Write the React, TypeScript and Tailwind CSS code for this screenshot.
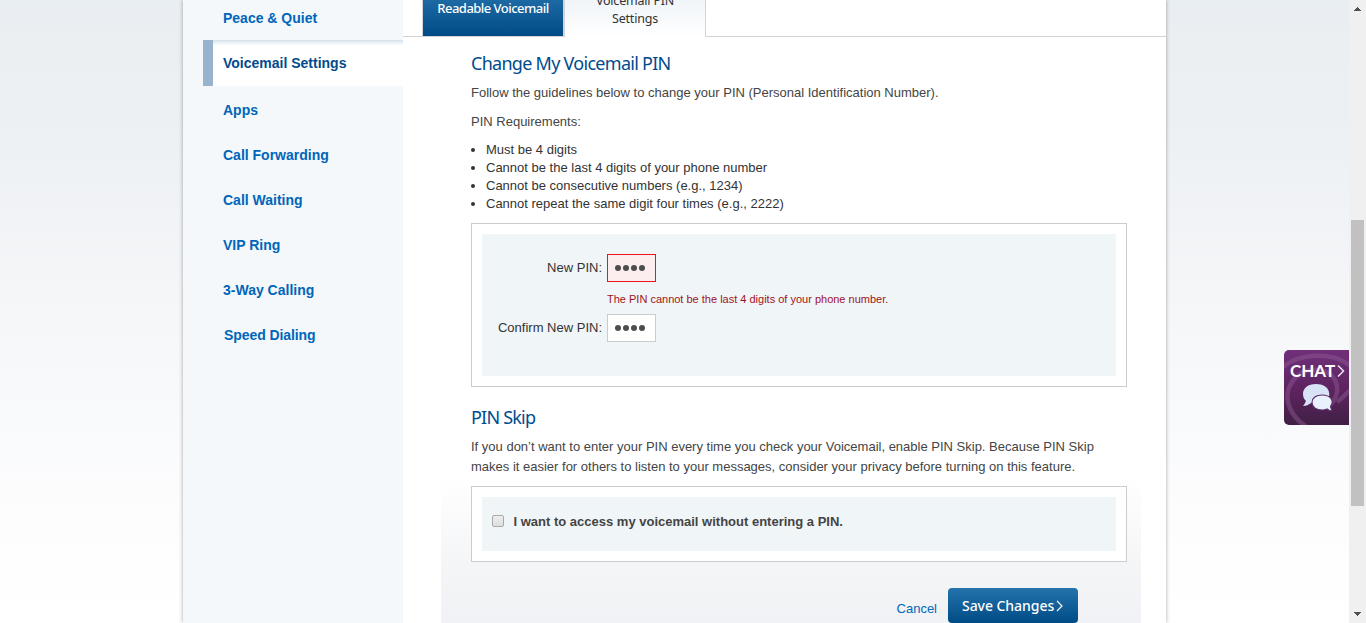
import React from "react";

const navItems = ["Apps", "Call Forwarding", "Call Waiting", "VIP Ring", "3-Way Calling", "Speed Dialing"];
const requirements = [
  "Must be 4 digits",
  "Cannot be the last 4 digits of your phone number",
  "Cannot be consecutive numbers (e.g., 1234)",
  "Cannot repeat the same digit four times (e.g., 2222)",
];

function Sidebar() {
  return (
    <nav className="w-[220px] shrink-0 bg-[#f4f8fb] text-[14px] font-bold text-[#0066b9]">
      <div className="flex h-10 items-start pl-10 pt-[9px] leading-[18px]">Peace &amp; Quiet</div>
      <div className="ml-5 flex h-[46px] items-center border-l-[10px] border-[#98b3ce] bg-white bg-[linear-gradient(#d3e0ea,#eef3f7_3px,#fff_6px)] pl-[10px] text-[#004b8d]">
        Voicemail Settings
      </div>
      <div className="pt-px">
        {navItems.map((item) => (
          <div key={item} className="flex h-[45px] items-center pl-10 pt-px last:pl-[41px] last:tracking-[-0.08px]">{item}</div>
        ))}
      </div>
    </nav>
  );
}

function Tabs() {
  return (
    <div className="flex h-[37px] overflow-hidden font-['Noto_Sans','Open_Sans',sans-serif] text-[13px]">
      <div className="w-[19px] border-b border-[#d2d2d2]" />
      <div className="w-[142px] border-b border-x border-[#cfd5da] bg-[linear-gradient(#1d69a4,#004b85)] text-center font-medium leading-[18px] tracking-[-0.53px] text-white">
        <span className="-mt-px block">Readable Voicemail</span>
      </div>
      <div className="flex w-[142px] flex-col items-center border-l border-r border-[#d2d6d9] bg-[linear-gradient(#f0f5f9,#fff)] text-[12.5px] leading-[18px] tracking-[-0.2px] text-[#333]">
        <span className="-mt-2 h-[18px] shrink-0">Voicemail PIN</span>
        <span className="h-[18px] shrink-0">Settings</span>
      </div>
      <div className="flex-1 border-b border-[#d2d2d2]" />
    </div>
  );
}

function PinField({ label, error }: { label: string; error?: boolean }) {
  return (
    <div className="flex h-7 items-center">
      <label className="w-[121px] pr-px text-right">{label}</label>
      <div className={"ml-1 flex h-7 w-[49px] items-center gap-[2px] border pl-[7px] " + (error ? "border-[#f01020] bg-[#fceeee]" : "border-[#ccc] bg-white")}>
        {[0, 1, 2, 3].map((n) => (
          <span key={n} className="size-[6px] rounded-full bg-[#4d4d4d]" />
        ))}
      </div>
    </div>
  );
}

function Chat() {
  return (
    <div className="absolute left-[1284px] top-[350px] h-[75px] w-[65px] overflow-hidden rounded-l-[5px] bg-[linear-gradient(#70307a,#5c235f_55%,#402044)]">
      <svg className="absolute inset-0" width="65" height="75" viewBox="0 0 65 75" fill="none">
        <path d="M-2 18C14 3 48 1 67 16M28 80C7 69-3 49 8 32C18 16 43 16 51 30C56 40 52 50 44 57M53 52C59 48 62 43 67 40" stroke="#8c568f" strokeWidth="4.5" opacity=".5" />
        <path d="M54 15.5L59.5 21L54 26.5" stroke="#eee5f2" strokeWidth="1.5" />
        <path d="M32 34C24 34 19 38 19 44C19 47 20 49 22 51C21 53 20 55 19 56C23 56 25 54 27 53C39 56 47 50 45 42C44 37 39 34 32 34Z" fill="#d9e3f6" />
        <path d="M38 45C32 45 28 48 28 52.5C28 57 32 60 38 60C40 60 42 59.5 43 59C45 60.5 47 61 48 61L46.5 56.5C51 50 46 45 38 45Z" fill="#e9f1fc" stroke="#5b3069" strokeWidth="1.2" />
      </svg>
      <span className="absolute left-[6px] top-[11px] font-['Lato','Noto_Sans',sans-serif] text-[17px] font-bold leading-5 text-white">CHAT</span>
    </div>
  );
}

function Scrollbar() {
  return (
    <div className="flex w-[17px] shrink-0 flex-col items-center bg-[#f0f0f0]">
      <svg className="shrink-0" width="17" height="17" shapeRendering="crispEdges"><path d="M5 11L8.5 7L12 11Z" fill="#505050" /></svg>
      <div className="mt-[203px] h-[286px] w-[13px] bg-[#c1c1c1]" />
      <svg className="mt-auto shrink-0" width="17" height="17" shapeRendering="crispEdges"><path d="M5 6L8.5 10L12 6Z" fill="#505050" /></svg>
    </div>
  );
}

export default function App() {
  return (
    <div className="relative flex h-[623px] w-[1366px] overflow-hidden font-['Liberation_Sans',Arial,sans-serif] text-[13px] text-[#444]">
      <div className="flex flex-1 bg-[linear-gradient(#e9eef2,#edf0f3_120px,#f5f7f9_320px,#fdfdfe_520px,#fff)] pl-[183px]">
        <div className="flex w-[983px] bg-white shadow-[0_0_4px_rgba(0,0,0,0.35)]">
          <Sidebar />
          <main className="flex flex-1 flex-col">
            <Tabs />
            <div className="ml-[38px] w-[700px] flex-1 bg-[linear-gradient(#fff_440px,#f4f5f7_530px,#f1f2f5)] pl-[30px] pr-[14px]">
              <h2 className="pt-3 font-['Noto_Sans',sans-serif] text-[18px] leading-7 tracking-[-0.72px] text-[#004b8d]">Change My Voicemail PIN</h2>
              <p className="mt-[6px] leading-5">Follow the guidelines below to change your PIN (Personal Identification Number).</p>
              <p className="mt-[9px] leading-5">PIN Requirements:</p>
              <ul className="mt-[9px] list-disc pl-[15px] leading-[18px] text-[#333]">
                {requirements.map((item) => <li key={item}>{item}</li>)}
              </ul>
              <section className="mt-[10px] h-[164px] border border-[#ccc] bg-white p-[10px]">
                <div className="h-full bg-[#f0f5f8] pt-5 text-[#333]">
                  <PinField label="New PIN:" error />
                  <p className="ml-[125px] mt-2 h-6 text-[11px] leading-[19px] text-[#a0131c]">The PIN cannot be the last 4 digits of your phone number.</p>
                  <PinField label="Confirm New PIN:" />
                </div>
              </section>
              <h2 className="mt-4 font-['Noto_Sans',sans-serif] text-[18px] leading-7 tracking-[-0.8px] text-[#004b8d]">PIN Skip</h2>
              <p className="mt-[6px] whitespace-nowrap leading-5">
                If you don’t want to enter your PIN every time you check your Voicemail, enable PIN Skip. Because PIN Skip<br />
                makes it easier for others to listen to your messages, consider your privacy before turning on this feature.
              </p>
              <section className="mt-[9px] h-[76px] border border-[#ccc] bg-white p-[10px]">
                <div className="flex h-full items-start bg-[#f0f5f8] pl-[10px] pt-4 font-bold leading-[18px]">
                  <span className="mt-[2px] size-3 rounded-[2px] border border-[#aaa] bg-[linear-gradient(#eee,#ddd)]" />
                  <span className="ml-[9.5px]">I want to access my voicemail without entering a PIN.</span>
                </div>
              </section>
              <div className="mt-[26px] flex items-center justify-end pr-[49px]">
                <span className="mr-[11px] pt-[7px] text-[#0066b9]">Cancel</span>
                <button className="flex h-[35px] w-[130px] items-center rounded-[4px] bg-[linear-gradient(#2473ad,#004b85)] pl-[14px] font-['Noto_Sans',sans-serif] text-[14px] font-medium tracking-[-0.05px] text-white">
                  Save Changes
                  <svg className="ml-[2px]" width="7" height="12" viewBox="0 0 7 12" fill="none"><path d="M1 1L6 6L1 11" stroke="white" strokeWidth="1.2" /></svg>
                </button>
              </div>
            </div>
          </main>
        </div>
      </div>
      <Scrollbar />
      <Chat />
    </div>
  );
}
